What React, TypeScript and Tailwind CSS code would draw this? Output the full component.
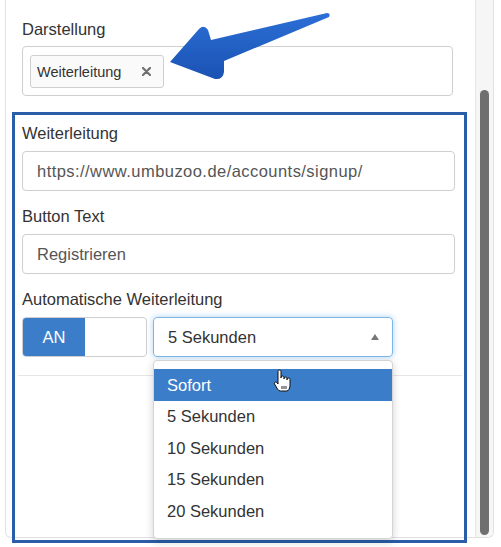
import React from "react";

const options = ["Sofort", "5 Sekunden", "10 Sekunden", "15 Sekunden", "20 Sekunden"];

function Arrow() {
  return (
    <svg className="absolute left-0 top-0" width="501" height="100" viewBox="0 0 501 100">
      <defs>
        <linearGradient id="arr" x1="0" y1="0" x2="0" y2="1">
          <stop offset="0" stopColor="#2c6fd6" />
          <stop offset="1" stopColor="#1a52b3" />
        </linearGradient>
      </defs>
      <path
        d="M170 62 L199 29 Q204 24 208 30 L211 40 L327 13 Q331 13 329 17 L224 61 L224 72 Q223 80 215 79 Z"
        fill="url(#arr)"
      />
    </svg>
  );
}

function HandCursor() {
  return (
    <svg className="absolute left-[273px] top-[369px]" width="20" height="24" viewBox="0 0 20 24">
      <path
        d="M5 2.5 a1.5 1.5 0 0 1 3 0 V9 V8.5 a1.5 1.5 0 0 1 3 0 V10 V9.5 a1.5 1.5 0 0 1 3 0 V11 V10.5 a1.5 1.5 0 0 1 3 0 V17 q0 4 -3 5 H7.5 q-2 0 -3 -2 L1.5 15 a1.3 1.3 0 0 1 2 -1.6 L5 15 Z"
        fill="#fff"
        stroke="#111"
        strokeWidth="1"
        strokeLinejoin="round"
      />
      <path d="M9 17 v3 M11 17 v3 M13 17 v3" stroke="#111" strokeWidth="0.9" />
    </svg>
  );
}

export default function App() {
  return (
    <div className="relative w-[501px] h-[547px] overflow-hidden bg-white font-['Liberation_Sans',Arial,sans-serif] text-[16.5px] leading-[20px] text-[#333]">
      <div className="ml-[5px] w-[489px] h-[538px] flex border-x border-b border-[#e2e2e2] rounded-b-[6px]">
        <div className="flex-1 min-w-0">
          {/* Darstellung */}
          <div className="pl-[16px] pt-[19px]">
            <div>Darstellung</div>
            <div className="mt-[7px] w-[431px] h-[50px] border border-[#cfcfcf] rounded-[4px] pl-[7px] pt-[8px]">
              <div className="inline-flex items-center h-[33px] w-[134px] border border-[#cfcfcf] rounded-[3px] bg-[#fafafa] pl-[6px] text-[14.5px] text-[#333]">
                <span>Weiterleitung</span>
                <svg className="ml-[21px]" width="9" height="9" viewBox="0 0 9 9">
                  <path d="M1 1 L8 8 M8 1 L1 8" stroke="#707070" strokeWidth="2.2" strokeLinecap="round" />
                </svg>
              </div>
            </div>
          </div>

          {/* Weiterleitung section */}
          <div className="relative mt-[16px] ml-[6px] w-[455px] h-[431px] border-[3px] border-[#2a5ea8] pl-[7px] pt-[8px]">
            <div>Weiterleitung</div>
            <div className="mt-[8px] w-[433px] h-[40px] border border-[#cfcfcf] rounded-[4px] px-[14px] flex items-center text-[#555] tracking-[0.45px]">
              https://www.umbuzoo.de/accounts/signup/
            </div>

            <div className="mt-[15px]">Button Text</div>
            <div className="mt-[8px] w-[433px] h-[40px] border border-[#cfcfcf] rounded-[4px] px-[14px] flex items-center text-[#555]">
              Registrieren
            </div>

            <div className="mt-[15px]">Automatische Weiterleitung</div>
            <div className="mt-[8px] flex gap-[6px]">
              <div className="w-[125px] h-[40px] border border-[#cfcfcf] rounded-[4px] overflow-hidden flex">
                <div className="w-[62px] h-full bg-[#3b7dc9] text-white flex items-center justify-center">AN</div>
              </div>
              <div className="relative w-[240px] h-[40px] border border-[#7fb6e6] rounded-[4px] shadow-[0_0_6px_rgba(102,175,233,0.55)] pl-[14px] flex items-center text-[#333]">
                5 Sekunden
                <svg className="absolute right-[13px] top-[16px]" width="8" height="6" viewBox="0 0 8 6">
                  <path d="M4 0 L8 6 H0 Z" fill="#777" />
                </svg>
              </div>
            </div>
            <div className="mt-[18px] -ml-[4px] w-[444px] h-px bg-[#e6e6e6]" />

            {/* open dropdown */}
            <div className="absolute left-[138px] top-[245px] w-[240px] border border-[#d4d4d4] rounded-[4px] bg-white shadow-[0_3px_8px_rgba(0,0,0,0.18)] pt-[8px] pb-[11px]">
              {options.map((o, i) => (
                <div
                  key={o}
                  className={
                    i === 0
                      ? "h-[31.5px] pl-[13px] flex items-center bg-[#3b7dc9] text-white"
                      : "h-[31.5px] pl-[13px] flex items-center text-[#333]"
                  }
                >
                  {o}
                </div>
              ))}
            </div>
          </div>
        </div>

        {/* scrollbar */}
        <div className="w-[18px] h-full bg-[#f6f6f6] border-l border-[#e6e6e6] rounded-br-[6px] flex justify-center">
          <div className="mt-[90px] w-[9px] h-[445px] rounded-full bg-[#6f6f6f]" />
        </div>
      </div>

      <Arrow />
      <HandCursor />
    </div>
  );
}
